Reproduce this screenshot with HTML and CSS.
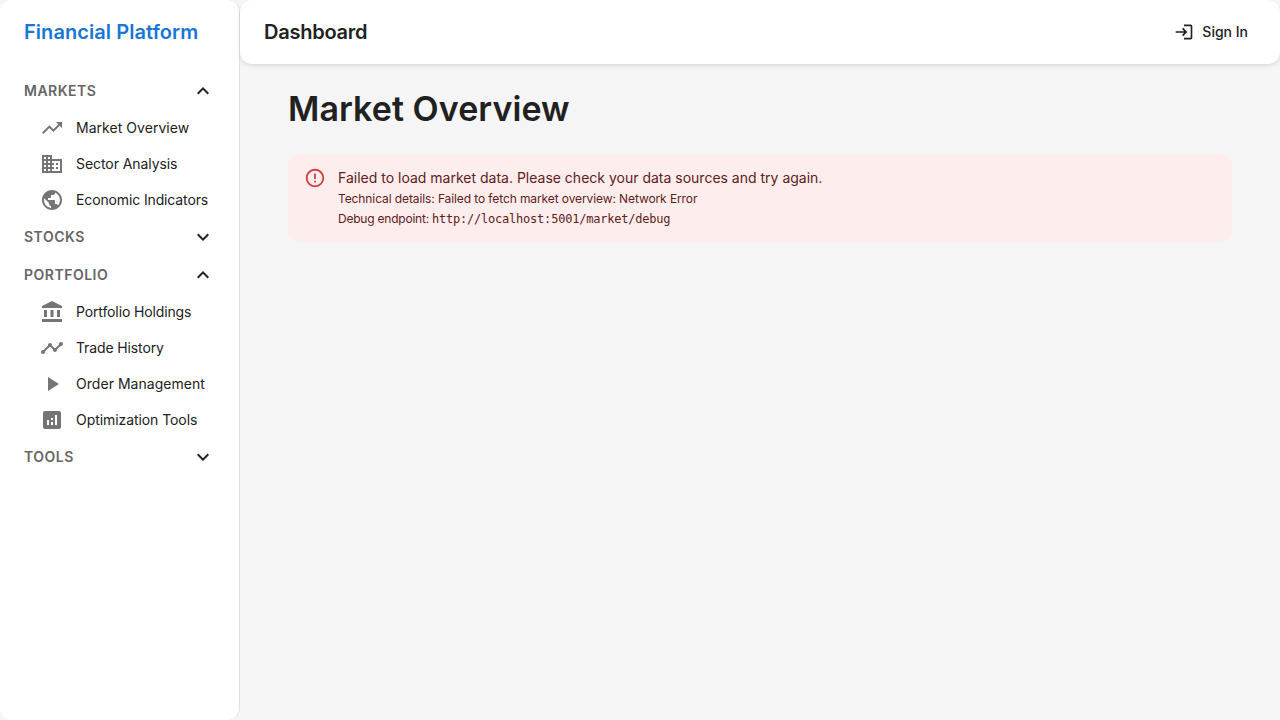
FILE: index.html
```html
<!DOCTYPE html>
<html lang="en">
<head>
<meta charset="utf-8">
<title>Financial Platform</title>
<link rel="stylesheet" href="styles.css">
</head>
<body>
<div class="app">
  <aside class="sidebar">
    <div class="brand">Financial Platform</div>
    <nav class="nav">
      <div class="group"><span>Markets</span><svg class="chev" viewBox="0 0 24 24"><path d="m12 8-6 6 1.41 1.41L12 10.83l4.59 4.58L18 14z"/></svg></div>
      <a class="item"><svg class="icon" viewBox="0 0 24 24"><path d="m16 6 2.29 2.29-4.88 4.88-4-4L2 16.59 3.41 18l6-6 4 4 6.3-6.29L22 12V6z"/></svg>Market Overview</a>
      <a class="item snug"><svg class="icon" viewBox="0 0 24 24"><path d="M12 7V3H2v18h20V7zM6 19H4v-2h2zm0-4H4v-2h2zm0-4H4V9h2zm0-4H4V5h2zm4 12H8v-2h2zm0-4H8v-2h2zm0-4H8V9h2zm0-4H8V5h2zm10 12h-8v-2h2v-2h-2v-2h2v-2h-2V9h8zm-2-8h-2v2h2zm0 4h-2v2h2z"/></svg>Sector Analysis</a>
      <a class="item tight"><svg class="icon" viewBox="0 0 24 24"><path d="M12 2C6.48 2 2 6.48 2 12s4.48 10 10 10 10-4.48 10-10S17.52 2 12 2m-1 17.93c-3.95-.49-7-3.85-7-7.93 0-.62.08-1.21.21-1.79L9 15v1c0 1.1.9 2 2 2zm6.9-2.54c-.26-.81-1-1.39-1.9-1.39h-1v-3c0-.55-.45-1-1-1H8v-2h2c.55 0 1-.45 1-1V7h2c1.1 0 2-.9 2-2v-.41c2.93 1.19 5 4.06 5 7.41 0 2.08-.8 3.97-2.1 5.39"/></svg>Economic Indicators</a>
      <div class="group"><span>Stocks</span><svg class="chev" viewBox="0 0 24 24"><path d="M16.59 8.59 12 13.17 7.41 8.59 6 10l6 6 6-6z"/></svg></div>
      <div class="group"><span>Portfolio</span><svg class="chev" viewBox="0 0 24 24"><path d="m12 8-6 6 1.41 1.41L12 10.83l4.59 4.58L18 14z"/></svg></div>
      <a class="item tight"><svg class="icon" viewBox="0 0 24 24"><path d="M4 10h3v7H4zm6.500 0h3v7h-3zM2 19h20v3H2zm15-9h3v7h-3zm-5-9L2 6v2h20V6z"/></svg>Portfolio Holdings</a>
      <a class="item tight"><svg class="icon" viewBox="0 0 24 24"><path d="M23 8c0 1.100-.9 2-2 2-.18 0-.35-.02-.51-.07l-3.560 3.550c.05.160.07.340.07.520 0 1.100-.9 2-2 2s-2-.9-2-2c0-.18.02-.36.07-.52l-2.550-2.550c-.16.050-.34.070-.52.070s-.36-.02-.52-.07l-4.550 4.560c.05.160.07.330.07.510 0 1.100-.9 2-2 2s-2-.9-2-2 .9-2 2-2c.18 0 .35.020.51.070l4.560-4.550C8.020 9.360 8 9.180 8 9c0-1.100.9-2 2-2s2 .9 2 2c0 .18-.02.360-.07.520l2.550 2.550c.16-.05.340-.07.520-.07s.36.020.52.070l3.550-3.560C19.020 8.350 19 8.180 19 8c0-1.100.9-2 2-2s2 .9 2 2"/></svg>Trade History</a>
      <a class="item"><svg class="icon" viewBox="0 0 24 24"><path d="M8 5v14l11-7z"/></svg>Order Management</a>
      <a class="item snug"><svg class="icon" viewBox="0 0 24 24"><path d="M19 3H5c-1.100 0-2 .9-2 2v14c0 1.100.9 2 2 2h14c1.100 0 2-.9 2-2V5c0-1.100-.9-2-2-2M9 17H7v-5h2zm4 0h-2v-3h2zm0-5h-2v-2h2zm4 5h-2V7h2z"/></svg>Optimization Tools</a>
      <div class="group"><span>Tools</span><svg class="chev" viewBox="0 0 24 24"><path d="M16.590 8.590 12 13.170 7.410 8.590 6 10l6 6 6-6z"/></svg></div>
    </nav>
  </aside>
  <div class="main">
    <header class="topbar">
      <div class="title">Dashboard</div>
      <button class="signin"><svg viewBox="0 0 24 24"><path d="M11 7 9.600 8.400l2.600 2.600H2v2h10.200l-2.600 2.600L11 17l5-5zm9 12h-8v2h8c1.100 0 2-.9 2-2V5c0-1.100-.9-2-2-2h-8v2h8z"/></svg>Sign In</button>
    </header>
    <main class="content">
      <h1>Market Overview</h1>
      <div class="alert">
        <svg class="alert-icon" viewBox="0 0 24 24"><path d="M11 15h2v2h-2zm0-8h2v6h-2zm.99-5C6.470 2 2 6.480 2 12s4.470 10 9.990 10C17.520 22 22 17.520 22 12S17.520 2 11.990 2M12 20c-4.420 0-8-3.580-8-8s3.580-8 8-8 8 3.580 8 8-3.580 8-8 8"/></svg>
        <div class="message">
          <div>Failed to load market data. Please check your data sources and try again.</div>
          <div class="detail">Technical details: Failed to fetch market overview: Network Error</div>
          <div class="detail endpoint">Debug endpoint: <code>http://localhost:5001/market/debug</code></div>
        </div>
      </div>
    </main>
  </div>
</div>
</body>
</html>
```
FILE: styles.css
```css
* { box-sizing: border-box; }
body { margin: 0; background: #f5f5f5; color: #212121; font-family: Inter, sans-serif; font-size: 14px; }
svg { fill: currentColor; flex-shrink: 0; display: block; }
.app { display: flex; height: 720px; overflow: hidden; }
.sidebar { width: 240px; flex-shrink: 0; background: #fff; border-right: 1px solid #e0e0e0; border-radius: 12px; }
.brand { height: 64px; padding: 0 24px; display: flex; align-items: center; font-size: 20px; font-weight: 600; letter-spacing: 0.06px; color: #1976d2; }
.nav { padding-top: 8px; line-height: 20px; }
.group { height: 38px; padding: 0 24px; display: flex; align-items: center; justify-content: space-between; font-weight: 600; letter-spacing: 0.5px; text-transform: uppercase; color: #666; }
.chev { width: 24px; height: 24px; color: #212121; }
.item { height: 36px; padding-left: 40px; display: flex; align-items: center; gap: 12px; white-space: nowrap; letter-spacing: 0.04px; }
.snug { letter-spacing: -0.07px; }
.tight { letter-spacing: -0.13px; }
.icon { width: 24px; height: 24px; color: #757575; }
.main { flex: 1; min-width: 0; }
.topbar { height: 64px; background: #fff; border-radius: 12px; padding: 0 32px 0 24px; display: flex; align-items: center; justify-content: space-between; box-shadow: 0 2px 4px rgba(0,0,0,.1); }
.title { font-size: 20px; font-weight: 600; letter-spacing: -0.25px; }
.signin { display: flex; align-items: center; gap: 8px; padding: 0; border: 0; background: none; color: inherit; font: 500 14px/24px Inter, sans-serif; }
.signin svg { width: 20px; height: 20px; }
.content { padding: 24px 48px; }
h1 { margin: 0 0 24px; font-size: 34px; line-height: 42px; font-weight: 600; letter-spacing: 0.06px; }
.alert { height: 88px; display: flex; gap: 12px; padding: 13px 16px; border-radius: 12px; background: #fdeded; color: #5f2120; }
.alert-icon { width: 22px; height: 22px; color: #d32f2f; opacity: .9; }
.message { line-height: 22px; }
.detail { font-size: 12px; line-height: 20px; letter-spacing: -0.1px; }
.endpoint { letter-spacing: -0.22px; }
code { font-family: "DejaVu Sans Mono", monospace; font-size: 12px; letter-spacing: -0.22px; }
```
